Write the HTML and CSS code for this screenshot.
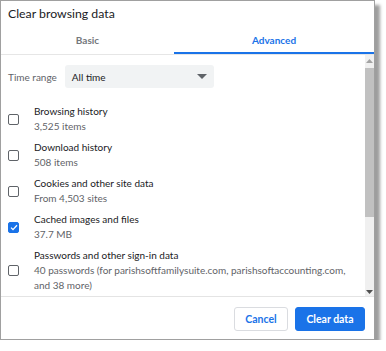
FILE: index.html
```html
<!DOCTYPE html>
<html lang="en">
<head>
  <meta charset="UTF-8" />
  <title>Clear browsing data</title>
  <link rel="stylesheet" href="styles.css">
</head>
<body>
  <div class="dialog">
    <div class="title">Clear browsing data</div>
    <div class="tabs">
      <div class="tab">Basic</div>
      <div class="tab active">Advanced</div>
    </div>
    <div class="body">
      <div class="content">
        <div class="range">
          <span class="range-label">Time range</span>
          <div class="select">
            <span>All time</span>
            <svg width="10" height="5" viewBox="0 0 10 5"><path d="M0 0h10L5 5z" fill="#5f6368"/></svg>
          </div>
        </div>

        <div class="option">
          <span class="box"></span>
          <div class="text">
            <div class="label">Browsing history</div>
            <div class="sub">3,525 items</div>
          </div>
        </div>
        <div class="option">
          <span class="box"></span>
          <div class="text">
            <div class="label">Download history</div>
            <div class="sub">508 items</div>
          </div>
        </div>
        <div class="option">
          <span class="box"></span>
          <div class="text">
            <div class="label">Cookies and other site data</div>
            <div class="sub">From 4,503 sites</div>
          </div>
        </div>
        <div class="option">
          <span class="box checked">
            <svg width="8" height="7" viewBox="0 0 8 7"><path d="M1 3.6l2 2L7 1.2" fill="none" stroke="#fff" stroke-width="1.3"/></svg>
          </span>
          <div class="text">
            <div class="label">Cached images and files</div>
            <div class="sub">37.7 MB</div>
          </div>
        </div>
        <div class="option">
          <span class="box"></span>
          <div class="text">
            <div class="label">Passwords and other sign-in data</div>
            <div class="sub">40 passwords (for parishsoftfamilysuite.com, parishsoftaccounting.com, and 38 more)</div>
          </div>
        </div>
      </div>
      <div class="scrollbar">
        <svg class="arrow" width="7" height="4" viewBox="0 0 7 4"><path d="M0 4h7L3.5 0z" fill="#a3a3a3"/></svg>
        <div class="track"><div class="thumb"></div></div>
        <svg class="arrow" width="7" height="4" viewBox="0 0 7 4"><path d="M0 0h7L3.5 4z" fill="#505050"/></svg>
      </div>
    </div>
    <div class="footer">
      <button class="btn cancel">Cancel</button>
      <button class="btn primary">Clear data</button>
    </div>
  </div>
</body>
</html>
```

FILE: styles.css
```css
body { margin: 0; background: #fff; font-family: Lato, "Noto Sans", sans-serif; color: #202124; }
.dialog { width: 373px; height: 338px; border: 1px solid #a0a0a0; background: #fff; box-shadow: 5px 5px 3px rgba(0, 0, 0, 0.38); display: flex; flex-direction: column; overflow: hidden; }

.title { font-size: 12.3px; line-height: 16px; padding: 5px 0 0 7px; height: 23px; color: #202124; }

.tabs { display: flex; border-bottom: 1px solid #e6e6e6; height: 25px; }
.tab { flex: 0 0 173px; text-align: center; font-size: 10px; font-weight: 700; color: #74787c; line-height: 22px; }
.tab.active { flex: 1; color: #1a73e8; border-bottom: 2px solid #1a73e8; }

.body { display: flex; height: 241px; border-bottom: 1px solid #e4e4e4; }
.content { flex: 1; overflow: hidden; padding: 10px 0 0 7px; }

.range { display: flex; align-items: center; gap: 8px; margin-bottom: 16px; }
.range-label { font-size: 10px; color: #5f6368; }
.select { width: 135px; height: 23px; background: #f1f3f4; border-radius: 3px; display: flex; align-items: center; justify-content: space-between; padding: 0 7px; font-size: 10px; color: #202124; }

.option { display: flex; align-items: center; gap: 15px; margin-bottom: 6px; }
.box { width: 9px; height: 9px; border: 1.5px solid #5f6368; border-radius: 2px; flex: none; display: flex; align-items: center; justify-content: center; }
.box.checked { background: #1a73e8; border-color: #1a73e8; }
.text { font-size: 10px; line-height: 15px; }
.label { color: #202124; }
.sub { color: #5f6368; padding-right: 10px; }

.scrollbar { width: 9px; background: #f0f0f0; display: flex; flex-direction: column; align-items: center; padding: 4px 0 2px; }
.arrow { flex: none; }
.track { flex: 1; width: 100%; padding: 5px 0; }
.thumb { height: 149px; background: #c1c1c1; }

.footer { flex: 1; display: flex; justify-content: flex-end; align-items: center; gap: 7px; padding: 1px 9px 0 0; }
.btn { font-family: inherit; font-size: 10.5px; font-weight: 700; height: 24px; border-radius: 3px; padding: 0; }
.cancel { width: 54px; background: #fff; border: 1px solid #dadce0; color: #1a73e8; }
.primary { width: 70px; background: #1a73e8; border: 1px solid #1a73e8; color: #fff; }
```
